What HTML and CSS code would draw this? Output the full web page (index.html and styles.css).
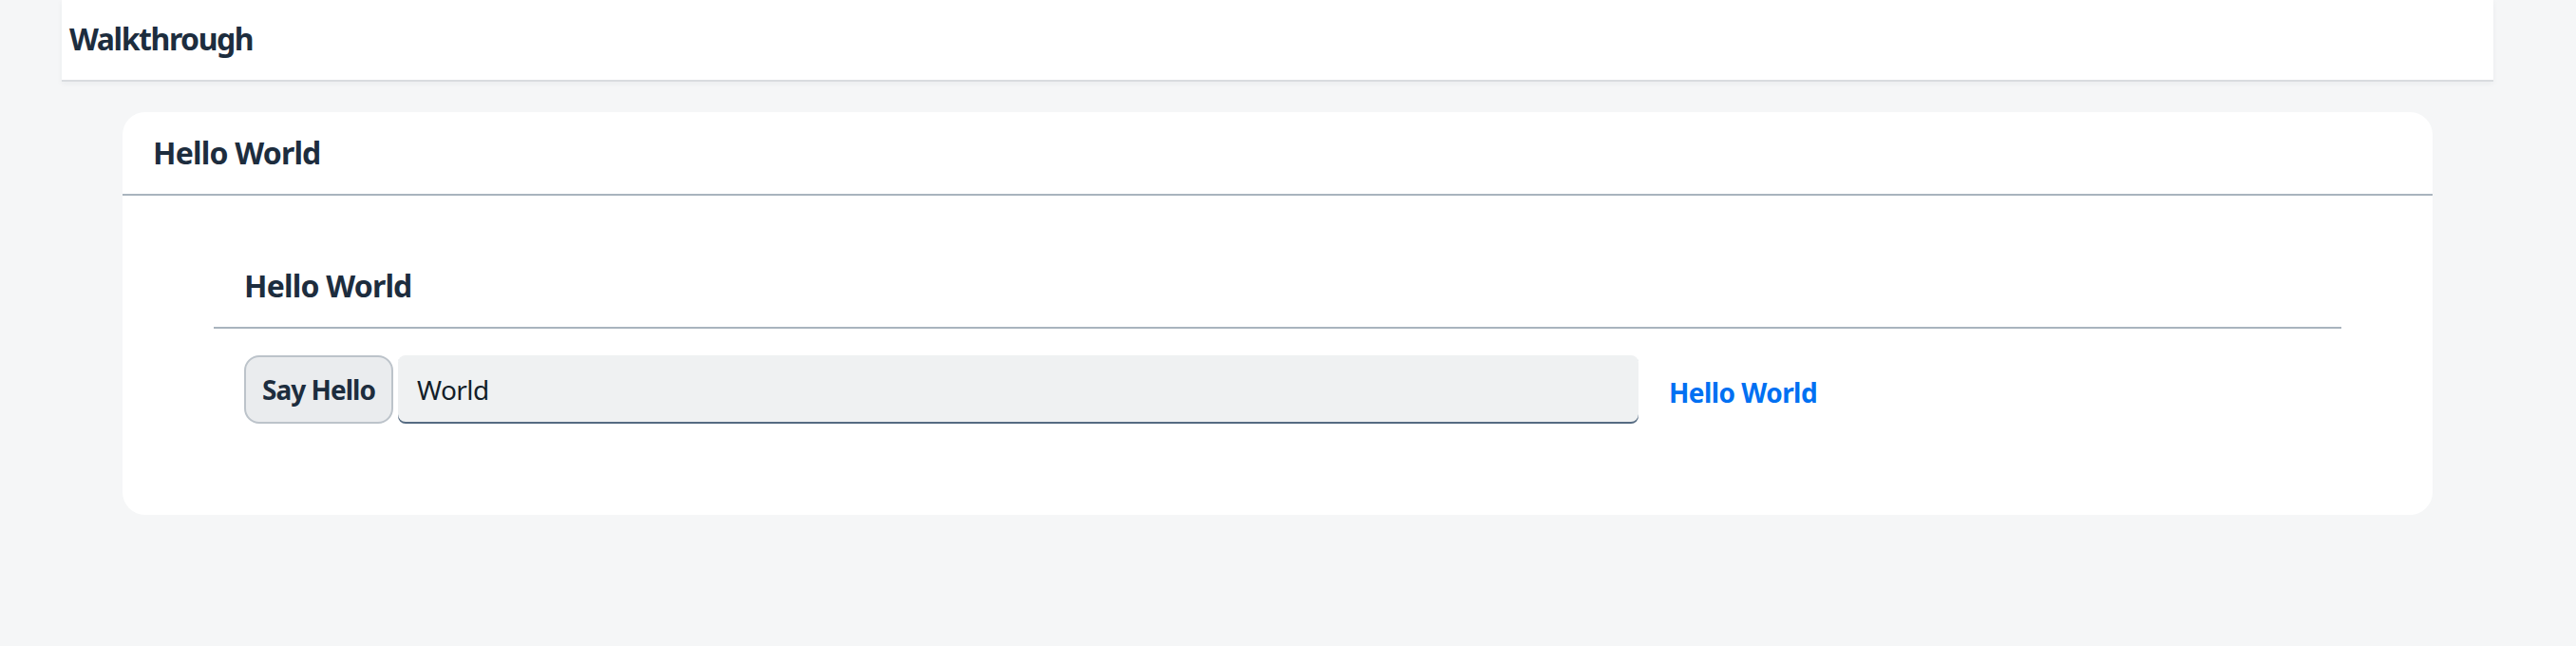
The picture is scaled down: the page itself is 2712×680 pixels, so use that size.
FILE: index.html
```html
<!DOCTYPE html>
<html lang="en">
<head>
<meta charset="utf-8">
<title>Walkthrough</title>
<link rel="stylesheet" href="styles.css">
</head>
<body>
<div class="shell">
  <header class="bar">
    <span class="bar-title">Walkthrough</span>
  </header>
  <main class="page-content">
    <section class="card">
      <div class="card-header">
        <h2 class="title">Hello World</h2>
      </div>
      <div class="card-body">
        <div class="panel">
          <div class="panel-header">
            <h3 class="title">Hello World</h3>
          </div>
          <div class="panel-content">
            <div class="row">
              <button class="btn" type="button">Say Hello</button>
              <input class="input" type="text" value="World">
              <span class="greeting">Hello World</span>
            </div>
          </div>
        </div>
      </div>
    </section>
  </main>
</div>
</body>
</html>
```

FILE: styles.css
```css
* {
  box-sizing: border-box;
}

html, body {
  margin: 0;
  padding: 0;
  background: #f5f6f7;
}

body {
  font-family: "Noto Sans", "Liberation Sans", sans-serif;
  color: #1d2d3e;
  width: 2712px;
  height: 680px;
  overflow: hidden;
}

.shell {
  width: 2560px;
  margin-left: 65px;
}

.bar {
  height: 86px;
  background: #ffffff;
  border-bottom: 2px solid #d9dcdf;
  box-shadow: 0 2px 6px rgba(34, 53, 72, 0.05);
  display: flex;
  align-items: center;
  padding-left: 8px;
  padding-bottom: 2px;
}

.bar-title {
  font-size: 32px;
  font-weight: 700;
  letter-spacing: -0.045em;
  line-height: 1;
}

.page-content {
  padding: 32px 64px;
}

.card {
  background: #ffffff;
  border-radius: 24px;
  height: 424px;
  overflow: hidden;
}

.card-header {
  height: 88px;
  border-bottom: 2px solid #a9b4be;
  display: flex;
  align-items: center;
  padding-left: 32px;
}

.title {
  margin: 0;
  font-size: 32px;
  font-weight: 700;
  letter-spacing: -0.025em;
  line-height: 1;
  color: #1d2d3e;
}

.card-body {
  padding: 50px 96px 0;
}

.panel-header {
  height: 90px;
  border-bottom: 2px solid #a9b4be;
  display: flex;
  align-items: center;
  padding-left: 32px;
  padding-top: 2px;
}

.panel-content {
  padding: 28px 32px 96px;
}

.row {
  display: flex;
  align-items: center;
}

.btn {
  width: 157px;
  height: 72px;
  border: 2px solid #bcc3ca;
  border-radius: 16px;
  background: #eaecee;
  color: #1d2d3e;
  font-family: inherit;
  font-size: 28px;
  font-weight: 700;
  letter-spacing: -0.035em;
  padding: 0;
}

.input {
  margin-left: 5px;
  width: 1306px;
  height: 72px;
  border: none;
  border-radius: 8px;
  background: #eff1f2;
  box-shadow: inset 0 -2px 0 #556b82;
  padding: 0 20px;
  font-family: inherit;
  font-size: 28px;
  letter-spacing: -0.02em;
  color: #131e29;
  outline: none;
}

.greeting {
  margin-left: 32px;
  margin-top: 6px;
  font-size: 28px;
  font-weight: 700;
  letter-spacing: -0.02em;
  color: #0070f2;
}
```
